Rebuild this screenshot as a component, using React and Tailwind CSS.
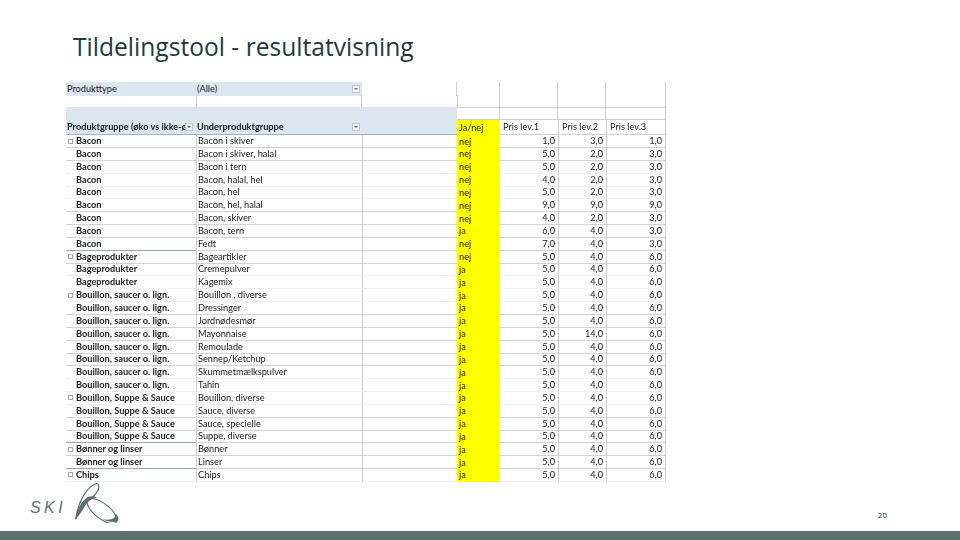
import React from 'react';

const COLS = 'grid grid-cols-[130px_166px_95px_43px_58px_48px_60px]';
const LATO = { fontFamily: 'Lato, "Liberation Sans", sans-serif' };

const LINED = [1, 2, 6, 7, 8, 9, 10, 14, 15, 16, 17, 18, 22, 23, 24, 25, 26];
const GROUP_END = [9, 24, 26];

const rows = [
  ['Bacon', 'Bacon i skiver', 'nej', '1,0', '3,0', '1,0', true],
  ['Bacon', 'Bacon i skiver, halal', 'nej', '5,0', '2,0', '3,0'],
  ['Bacon', 'Bacon i tern', 'nej', '5,0', '2,0', '3,0'],
  ['Bacon', 'Bacon, halal, hel', 'nej', '4,0', '2,0', '3,0'],
  ['Bacon', 'Bacon, hel', 'nej', '5,0', '2,0', '3,0'],
  ['Bacon', 'Bacon, hel, halal', 'nej', '9,0', '9,0', '9,0'],
  ['Bacon', 'Bacon, skiver', 'nej', '4,0', '2,0', '3,0'],
  ['Bacon', 'Bacon, tern', 'ja', '6,0', '4,0', '3,0'],
  ['Bacon', 'Fedt', 'nej', '7,0', '4,0', '3,0'],
  ['Bageprodukter', 'Bageartikler', 'nej', '5,0', '4,0', '6,0', true],
  ['Bageprodukter', 'Cremepulver', 'ja', '5,0', '4,0', '6,0'],
  ['Bageprodukter', 'Kagemix', 'ja', '5,0', '4,0', '6,0'],
  ['Bouillon, saucer o. lign.', 'Bouillon , diverse', 'ja', '5,0', '4,0', '6,0', true],
  ['Bouillon, saucer o. lign.', 'Dressinger', 'ja', '5,0', '4,0', '6,0'],
  ['Bouillon, saucer o. lign.', 'Jordnødesmør', 'ja', '5,0', '4,0', '6,0'],
  ['Bouillon, saucer o. lign.', 'Mayonnaise', 'ja', '5,0', '14,0', '6,0'],
  ['Bouillon, saucer o. lign.', 'Remoulade', 'ja', '5,0', '4,0', '6,0'],
  ['Bouillon, saucer o. lign.', 'Sennep/Ketchup', 'ja', '5,0', '4,0', '6,0'],
  ['Bouillon, saucer o. lign.', 'Skummetmælkspulver', 'ja', '5,0', '4,0', '6,0'],
  ['Bouillon, saucer o. lign.', 'Tahin', 'ja', '5,0', '4,0', '6,0'],
  ['Bouillon, Suppe & Sauce', 'Bouillon, diverse', 'ja', '5,0', '4,0', '6,0', true],
  ['Bouillon, Suppe & Sauce', 'Sauce, diverse', 'ja', '5,0', '4,0', '6,0'],
  ['Bouillon, Suppe & Sauce', 'Sauce, specielle', 'ja', '5,0', '4,0', '6,0'],
  ['Bouillon, Suppe & Sauce', 'Suppe, diverse', 'ja', '5,0', '4,0', '6,0'],
  ['Bønner og linser', 'Bønner', 'ja', '5,0', '4,0', '6,0', true],
  ['Bønner og linser', 'Linser', 'ja', '5,0', '4,0', '6,0'],
  ['Chips', 'Chips', 'ja', '5,0', '4,0', '6,0', true],
];

const FilterBtn = () => (
  <span className="flex w-[8px] h-[8px] shrink-0 items-center justify-center border border-[#c4c4c4] bg-[#f4f4f4]">
    <span className="w-0 h-0 border-x-[2px] border-x-transparent border-t-[2px] border-t-[#666]" />
  </span>
);

function DataRow({ row, index }) {
  const [group, sub, yn, p1, p2, p3, first] = row;
  const n = index + 1;
  const line = LINED.includes(n) ? 'border-[#d2d2d2]' : 'border-[#f1f1f1]';
  const firstLine = GROUP_END.includes(n) ? 'border-[#8ea6bf]' : line;
  return (
    <div className={`${COLS} h-[12.85px] leading-[12px]`}>
      <div className={`flex items-center border-b ${firstLine} font-bold whitespace-nowrap overflow-hidden`}>
        <span className="w-[10px] shrink-0 pl-[2px]">
          {first && <span className="block w-[5px] h-[5px] border border-[#a8a8a8]" />}
        </span>
        {group}
      </div>
      <div className={`flex items-center border-b ${line} border-l border-l-[#cfcfcf] pl-[1px] whitespace-nowrap overflow-hidden`}>{sub}</div>
      <div className={`border-b ${line} border-l border-l-[#cfcfcf]`} />
      <div className="flex items-center bg-[#ffff00] pl-[2px]">{yn}</div>
      <div className={`flex items-center justify-end border-b ${line} pr-[3px]`}>{p1}</div>
      <div className={`flex items-center justify-end border-b ${line} border-l border-l-[#cfcfcf] pr-[3px]`}>{p2}</div>
      <div className={`flex items-center justify-end border-b ${line} border-x border-x-[#cfcfcf] pr-[3px]`}>{p3}</div>
    </div>
  );
}

export default function App() {
  return (
    <div className="w-[960px] h-[540px] bg-white overflow-hidden flex flex-col" style={LATO}>
      <h1 className="pl-[73px] h-[82px] pt-[30px] text-[24.6px] leading-[34px] text-[#1d3b3f]" style={{ fontFamily: '"Open Sans", sans-serif' }}>
        Tildelingstool - resultatvisning
      </h1>

      {/* Pivot table pasted as a picture, so slightly soft */}
      <div className="ml-[66px] w-[600px] text-[9.2px] text-[#222] blur-[0.4px]">
        <div className={`${COLS} h-[13px]`}>
          <div className="flex items-center bg-[#dce6f1] pl-[1px]">Produkttype</div>
          <div className="flex items-center justify-between bg-[#dce6f1] pl-[1px] pr-[2px]">(Alle)<FilterBtn /></div>
          <div className="border-r border-[#cfcfcf]" />
          <div className="border-r border-[#cfcfcf]" />
          <div className="border-r border-[#cfcfcf]" />
          <div className="border-r border-[#cfcfcf]" />
          <div className="border-r border-[#cfcfcf]" />
        </div>
        <div className={`${COLS} h-[12px]`}>
          <div />
          <div className="border-x border-[#cfcfcf]" />
          <div />
          <div className="border-x border-[#cfcfcf]" />
          <div className="border-r border-[#cfcfcf]" />
          <div className="border-r border-[#cfcfcf]" />
          <div className="border-r border-[#cfcfcf]" />
        </div>
        <div className={`${COLS} h-[13px]`}>
          <div className="col-span-3 bg-[#dce6f1]" />
          <div className="border-y border-r border-[#cfcfcf]" />
          <div className="border-y border-r border-[#cfcfcf]" />
          <div className="border-y border-r border-[#cfcfcf]" />
          <div className="border-y border-r border-[#cfcfcf]" />
        </div>
        <div className={`${COLS} h-[15px]`}>
          <div className="flex items-center bg-[#dce6f1] border-b border-[#95b3d7] font-bold pl-[1px] pr-[3px] whitespace-nowrap overflow-hidden">
            <span className="flex-1 overflow-hidden">Produktgruppe (øko vs ikke-øko)</span>
            <FilterBtn />
          </div>
          <div className="flex items-center justify-between bg-[#dce6f1] border-b border-[#95b3d7] font-bold pl-[1px] pr-[2px]">Underproduktgruppe<FilterBtn /></div>
          <div className="bg-[#dce6f1] border-b border-[#95b3d7]" />
          <div className="flex items-center bg-[#ffff00] pl-[2px]">Ja/nej</div>
          <div className="flex items-center border-b border-[#cfcfcf] pl-[3px]">Pris lev.1</div>
          <div className="flex items-center border-b border-l border-[#cfcfcf] pl-[3px]">Pris lev.2</div>
          <div className="flex items-center border-b border-x border-[#cfcfcf] pl-[3px]">Pris lev.3</div>
        </div>
        {rows.map((row, i) => <DataRow key={i} row={row} index={i} />)}
      </div>

      <div className="flex-1 flex items-center justify-between pl-[30px] pr-[73px]">
        <div className="flex items-center gap-[12px]">
          <span className="w-[33px] mt-[4px] text-[16px] italic tracking-[3.4px] text-[#5f6f6f]" style={{ fontFamily: '"Liberation Sans", sans-serif' }}>SKI</span>
          <svg className="mb-[6px]" width="45" height="40" viewBox="0 0 45 40" fill="none">
            {/* ring one: thin upper arc, heavy crescent running to the lower left */}
            <path d="M1 36 C2 24 9 6 20 1 C24 -1 25 5 22 9 C20 12 18 14 16 15" stroke="#5f6f6f" strokeWidth="1.2" />
            <path d="M0 37 C1 28 7 17 13 14 C16 13 20 13 22 15 C17 15 13 18 10 23 C7 28 4 33 0 37 Z" fill="#5f6f6f" />
            {/* ring two */}
            <ellipse cx="27" cy="28" rx="18" ry="7.5" transform="rotate(38 27 28)" stroke="#5f6f6f" strokeWidth="1.1" />
            <path d="M27 36 C33 39 40 40 43 38 C44 35 43 33 41 31 C41 35 36 38 27 36 Z" fill="#5f6f6f" />
          </svg>
        </div>
        <span className="text-[8px] mt-[18px] text-[#1f3a3d]" style={{ fontFamily: '"Open Sans", sans-serif' }}>20</span>
      </div>

      <div className="h-[9px] bg-[#5f6f6f]" />
    </div>
  );
}
